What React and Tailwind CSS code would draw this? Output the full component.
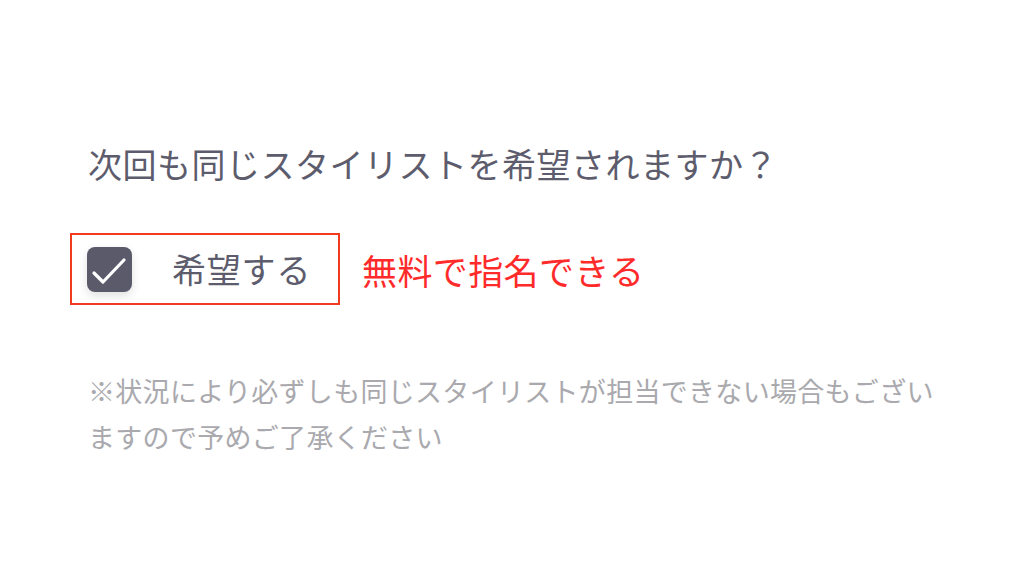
import React, { useState } from "react";

const font = { fontFamily: '"Noto Sans CJK JP", "Noto Sans", sans-serif' };

const CheckIcon = () => (
    <svg width="45" height="45" viewBox="0 0 45 45" fill="none">
        <path
            d="M7 26 L16 35 L37 13"
            stroke="#ffffff"
            strokeWidth="3.2"
            strokeLinecap="round"
            strokeLinejoin="round"
        />
    </svg>
);

const App = () => {
    const [checked, setChecked] = useState(true);

    return (
        <div className="w-[1024px] h-[576px] bg-white overflow-hidden" style={font}>
            <div className="flex flex-col pt-[147px] pl-[88px]">
                <h2 className="text-[34px] leading-none tracking-[0.5px] text-[#5d5c6d] font-normal">
                    次回も同じスタイリストを希望されますか？
                </h2>
                <div className="flex items-center mt-[52px] -ml-[18px]">
                    <label
                        className="flex items-center w-[270px] h-[72px] border-2 border-[#f23a1f] pl-[15px] cursor-pointer"
                        onClick={() => setChecked(!checked)}>
                        <span className="flex items-center justify-center w-[45px] h-[45px] rounded-lg bg-[#5b5a6b] shadow-[0_4px_10px_rgba(0,0,0,0.12)]">
                            {checked && <CheckIcon />}
                        </span>
                        <span className="ml-[40px] text-[34px] leading-none tracking-[0.8px] text-[#5d5c6d]">
                            希望する
                        </span>
                    </label>
                    <span className="ml-[22px] text-[35px] leading-none tracking-[0.4px] text-[#ff2b2b]">
                        無料で指名できる
                    </span>
                </div>
                <p className="mt-[63px] text-[27px] leading-[46px] tracking-[0.3px] text-[#a9a9ae]">
                    ※状況により必ずしも同じスタイリストが担当できない場合もござい
                    <br />
                    ますので予めご了承ください
                </p>
            </div>
        </div>
    );
};

export default App;
